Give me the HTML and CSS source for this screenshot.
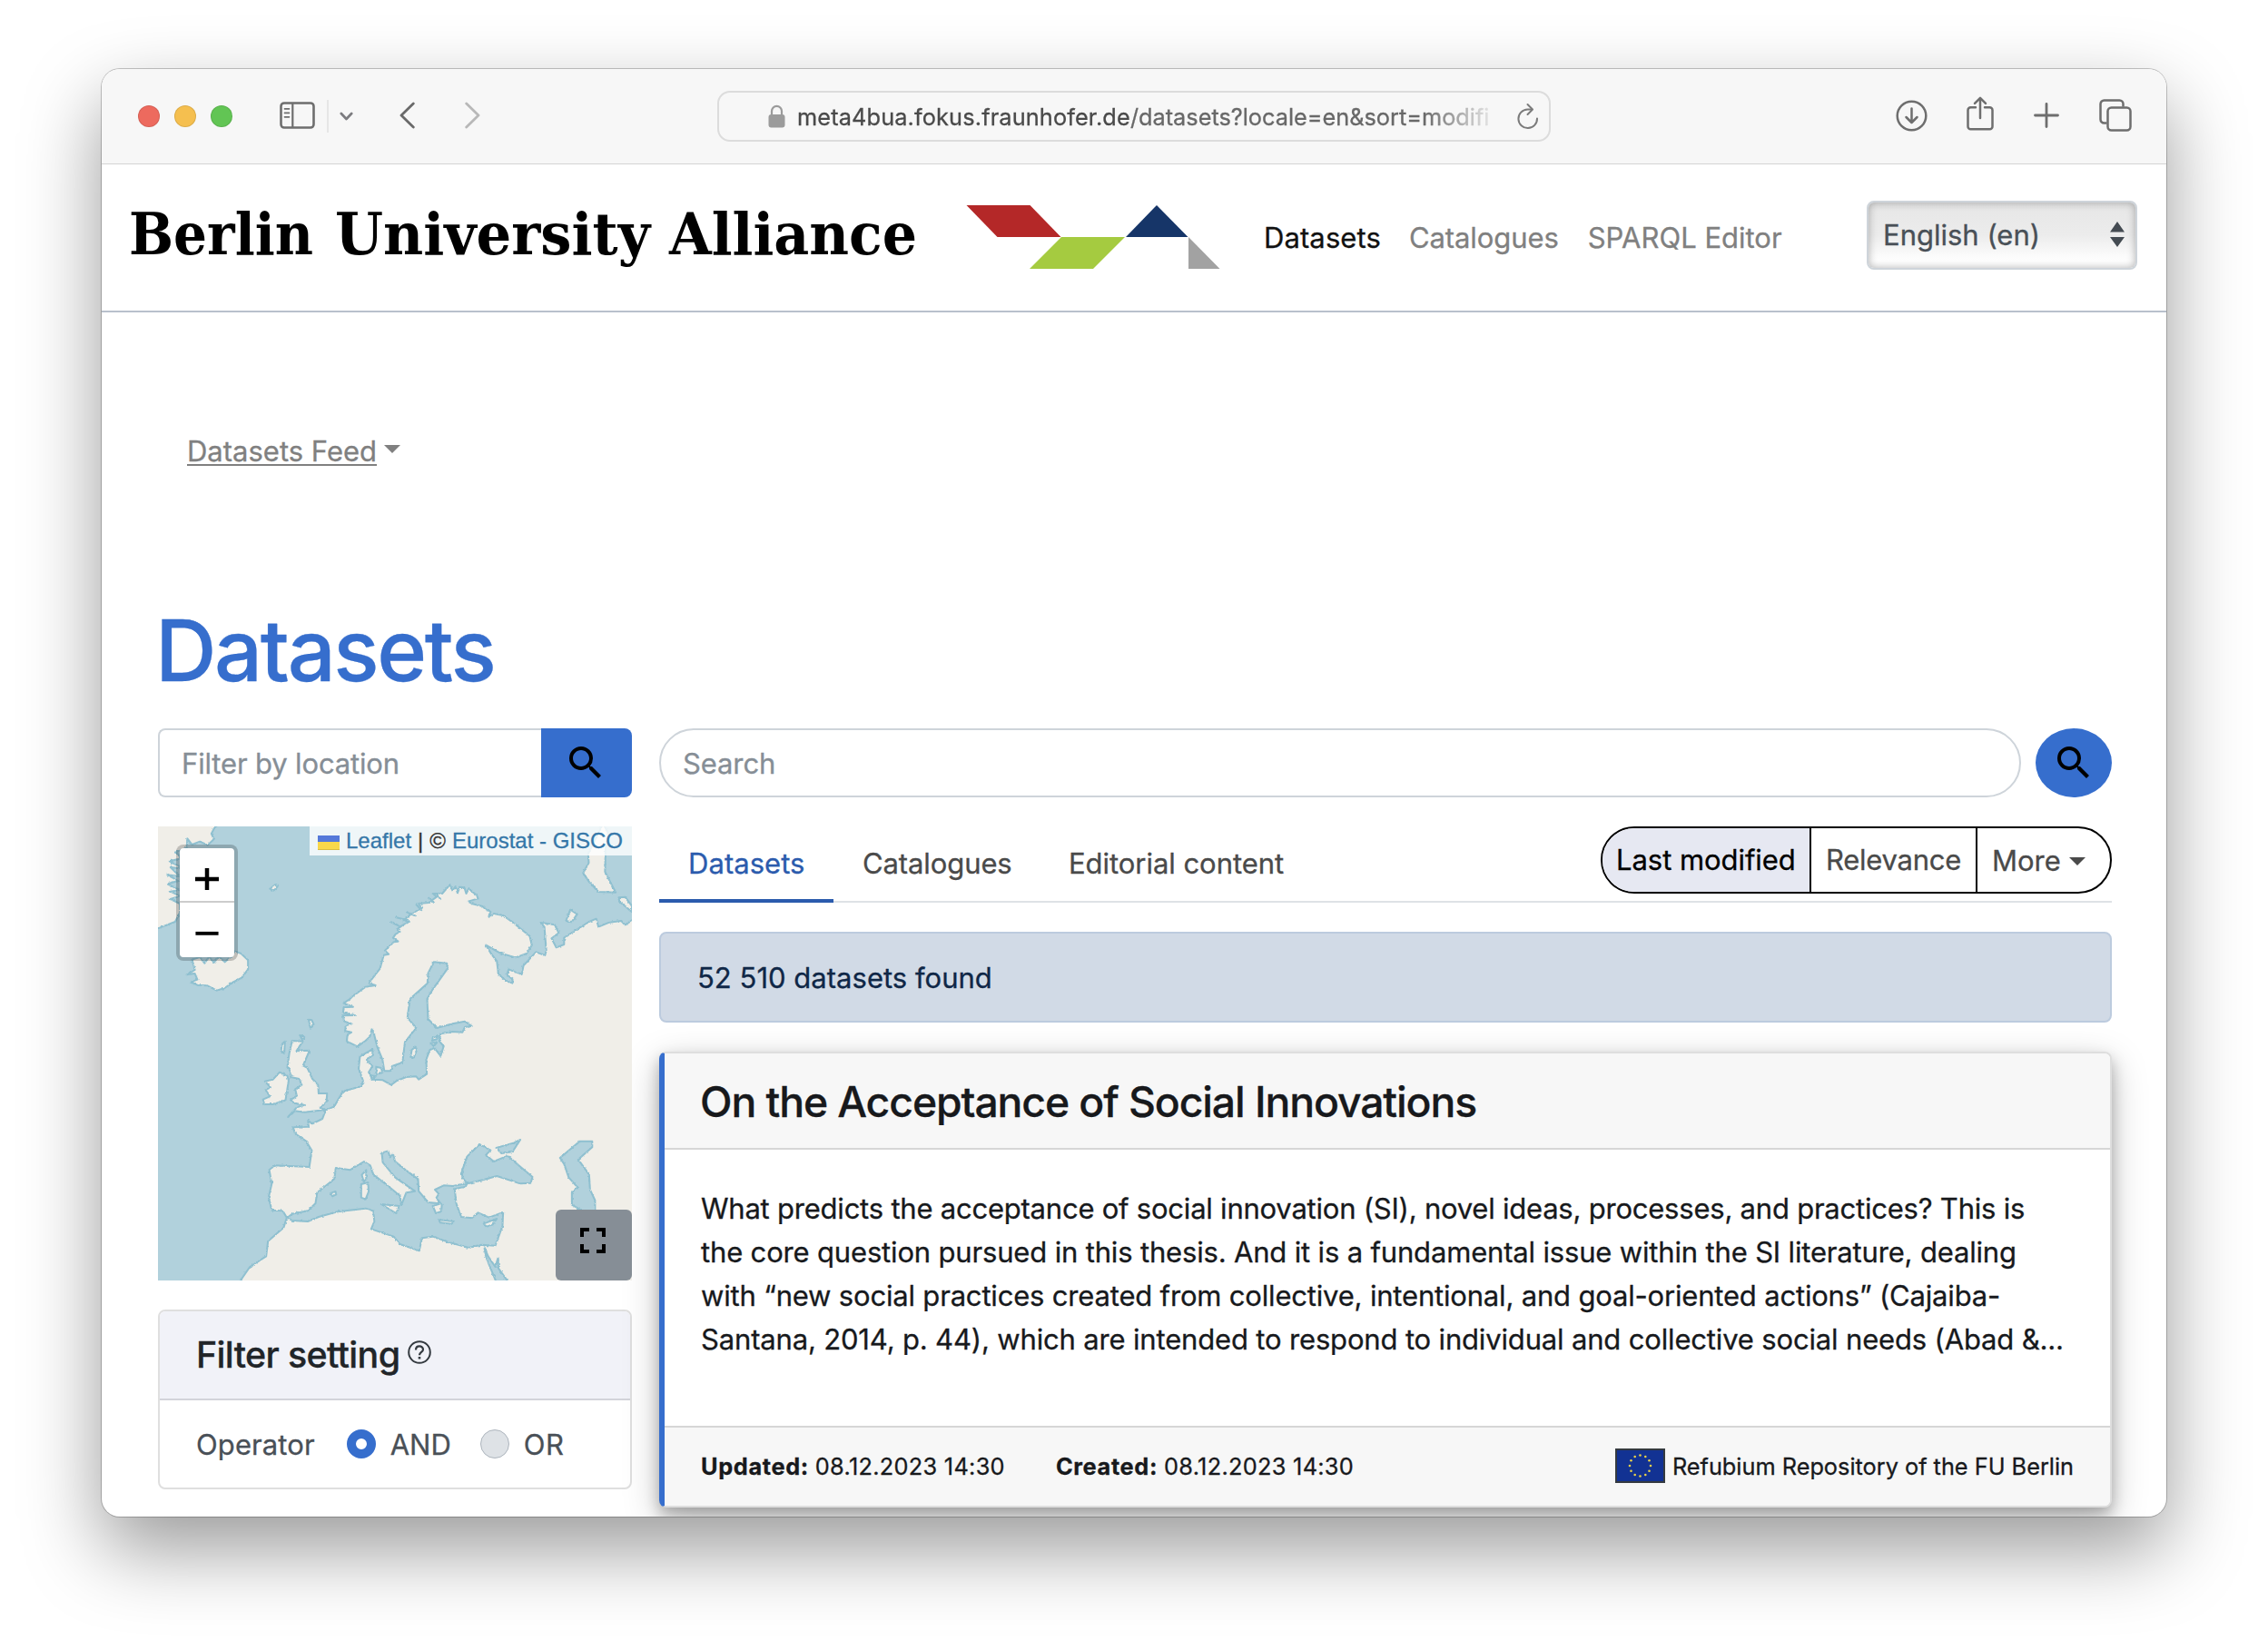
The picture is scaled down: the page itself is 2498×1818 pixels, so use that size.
FILE: index.html
```html
<!DOCTYPE html>
<html lang="en">
<head>
<meta charset="utf-8">
<title>Datasets - Berlin University Alliance</title>
<link rel="stylesheet" href="styles.css">
</head>
<body>
<div class="window">
  <div class="toolbar">
    <div class="toolbar-left">
      <span class="light red"></span><span class="light yellow"></span><span class="light green"></span>
      <svg class="ic-sidebar" width="39" height="30" viewBox="0 0 39 30" fill="none" stroke="#6e6e6e"><rect x="1.500" y="1.500" width="36" height="27" rx="3.500" stroke-width="2.600"/><path d="M14.300 1.500v27" stroke-width="2.200"/><path d="M5.500 7.800h5M5.500 12.300h5M5.500 16.800h5" stroke-width="1.700" stroke-linecap="round"/></svg>
      <span class="tool-sep"></span>
      <svg class="ic-chev" width="15" height="10" viewBox="0 0 15 10" fill="none" stroke="#7c7c80" stroke-width="2.700" stroke-linecap="round" stroke-linejoin="round"><path d="M1.800 2l5.700 6 5.700-6"/></svg>
      <svg class="ic-back" width="17" height="30" viewBox="0 0 17 30" fill="none" stroke="#6a6a6a" stroke-width="2.800" stroke-linecap="round" stroke-linejoin="round"><path d="M15.300 2L2 15l13.300 13"/></svg>
      <svg class="ic-fwd" width="17" height="30" viewBox="0 0 17 30" fill="none" stroke="#b8b8b8" stroke-width="2.800" stroke-linecap="round" stroke-linejoin="round"><path d="M1.700 2L15 15 1.700 28"/></svg>
    </div>
    <div class="address">
      <svg class="ic-lock" width="19" height="26" viewBox="0 0 19 26"><rect x="0.500" y="11" width="18" height="14.500" rx="3" fill="#9b9b9b"/><path d="M4 12V7.500a5.500 5.700 0 0 1 11 0V12" fill="none" stroke="#9b9b9b" stroke-width="2.200"/></svg>
      <div class="url"><span class="url-host">meta4bua.fokus.fraunhofer.de</span><span class="url-path">/datasets?locale=en&amp;sort=modifi</span></div>
      <svg class="ic-reload" width="24" height="30" viewBox="0 0 24 30" fill="none" stroke="#7b7b7b" stroke-width="2" stroke-linecap="round" stroke-linejoin="round"><path d="M16 7.500h-4.500A10.300 10.300 0 1 0 22 17.500"/><path d="M11.500 2l5.500 5.500-5.500 5.500"/></svg>
    </div>
    <div class="toolbar-right">
      <svg class="ic-download" width="35" height="35" viewBox="0 0 35 35" fill="none" stroke="#6e6e6e" stroke-width="2.500" stroke-linecap="round" stroke-linejoin="round"><circle cx="17.500" cy="17.500" r="15.800"/><path d="M17.500 9.500v15M11.500 19l6 6 6-6"/></svg>
      <svg class="ic-share" width="30" height="38" viewBox="0 0 30 38" fill="none" stroke="#6e6e6e" stroke-width="2.500" stroke-linecap="round" stroke-linejoin="round"><path d="M10 12.300H4.500a3 3 0 0 0-3 3v18a3 3 0 0 0 3 3h21a3 3 0 0 0 3-3v-18a3 3 0 0 0-3-3H20"/><path d="M15 24V2M9 7.800L15 1.800l6 6"/></svg>
      <svg width="28" height="28" viewBox="0 0 28 28" stroke="#6e6e6e" stroke-width="2.800" stroke-linecap="round"><path d="M14 1.500v25M1.500 14h25"/></svg>
      <svg width="36" height="36" viewBox="0 0 36 36" fill="none" stroke="#6e6e6e" stroke-width="2.500" stroke-linejoin="round"><rect x="9.500" y="9.500" width="25" height="25" rx="4"/><path d="M8.500 26.500H5.500a4 4 0 0 1-4-4v-17a4 4 0 0 1 4-4h17a4 4 0 0 1 4 4v3"/></svg>
    </div>
  </div>

  <header class="site-header">
    <svg class="brand" width="1200" height="100" viewBox="0 0 1200 100">
      <g class="brand-name">
        <text x="-2" y="68" textLength="203" lengthAdjust="spacingAndGlyphs">Berlin</text>
        <text x="225" y="68" textLength="347" lengthAdjust="spacingAndGlyphs">University</text>
        <text x="593" y="68" textLength="273" lengthAdjust="spacingAndGlyphs">Alliance</text>
      </g>
      <path d="M920.500 14h70l34 35h-70z" fill="#b42828"/>
      <path d="M1025 49h70l-35 35h-70z" fill="#a5cb40"/>
      <path d="M1130 14l34.500 35H1096z" fill="#163568"/>
      <path d="M1165 49l34.500 35H1165z" fill="#a2a2a2"/>
    </svg>
    <nav class="nav"><a class="nav-datasets">Datasets</a><a class="nav-catalogues">Catalogues</a><a>SPARQL Editor</a></nav>
    <div class="lang"><span>English (en)</span><svg width="16" height="28" viewBox="0 0 16 28" fill="#444b52"><path d="M8 0l8 11.500H0zM8 28L0 17h16z"/></svg></div>
  </header>

  <main class="content">
    <div class="feed"><span>Datasets Feed</span><i class="caret"></i></div>
    <h1 class="title">Datasets</h1>
    <div class="columns">
      <aside class="side">
        <div class="loc">
          <div class="loc-input">Filter by location</div>
          <div class="loc-btn"><svg width="48" height="48" viewBox="0 0 24 24"><path d="M15.500 14h-.79l-.28-.27A6.471 6.471 0 0 0 16 9.500 6.500 6.500 0 1 0 9.500 16c1.610 0 3.090-.59 4.230-1.570l.27.28v.79l5 4.990L20.490 19l-4.990-5zm-6 0C7.010 14 5 11.990 5 9.500S7.010 5 9.500 5 14 7.010 14 9.500 11.990 14 9.500 14z"/></svg></div>
        </div>
        <div class="map">
          <svg class="map-art" viewBox="26 30 1516 1500" preserveAspectRatio="none">
            <defs><filter id="coast" x="0" y="0" width="100%" height="100%"><feTurbulence type="fractalNoise" baseFrequency="0.12" numOctaves="2" seed="4"/><feDisplacementMap in="SourceGraphic" scale="8" xChannelSelector="R" yChannelSelector="G"/></filter></defs>
            <g filter="url(#coast)" stroke-width="6" stroke-linejoin="round">
              <rect x="0" y="0" width="1600" height="1600" fill="#b1d1dc"/>
              <g fill="#f0eee8" stroke="#8fc0d0">
                <path d="M960 222L968 242 978 228 984 250 992 230 1006 232 1012 252 1020 236 1046 258 1050 268 1018 278 1032 286 1064 294 1072 302 1090 312 1084 328 1100 318 1130 324 1165 350 1215 392 1222 422 1205 450 1170 463 1120 448 1075 422 1090 448 1110 475 1115 518 1142 542 1160 548 1160 535 1142 520 1148 502 1170 512 1190 518 1195 490 1235 445 1264 456 1268 440 1262 362 1250 348 1295 355 1308 382 1285 400 1300 430 1325 420 1325 398 1405 345 1428 335 1435 362 1470 347 1508 342 1520 356 1542 340 1600 340 1600 1600 270 1600 290 1530 320 1485 372 1450 378 1400 428 1355 438 1322 425 1300 390 1298 380 1255 390 1210 382 1165 400 1150 510 1155 518 1100 500 1070 465 1045 458 1024 508 1022 506 1002 520 1012 552 996 562 968 590 955 618 905 678 888 682 870 668 830 672 790 712 766 714 786 694 798 702 812 712 822 700 842 712 866 745 868 772 884 790 870 820 858 852 856 860 866 886 848 884 800 896 768 910 762 930 788 940 756 926 740 930 715 968 708 1000 710 1008 692 1030 690 1008 674 968 682 918 696 890 666 887 600 905 568 952 500 950 482 908 478 890 515 888 548 832 600 824 662 852 696 816 742 808 810 775 822 770 838 750 838 744 800 728 760 716 712 710 700 704 724 690 738 664 757 630 740 632 718 645 710 625 706 626 688 646 682 622 674 618 655 656 654 618 646 620 628 650 626 620 614 640 600 650 590 690 560 722 555 700 548 736 500 748 455 764 452 752 440 780 412 794 410 778 398 786 386 800 378 790 370 810 355 830 345 812 340 838 318 870 300 860 285 892 282 918 262 905 252 935 252z"/>
                <path d="M20 20h205l-18 14-10 20 8 18-20 20-25-12-25 10-15-20-2 30-35 15 20 20-40 10 45 25-42-5 30 30-40-5 35 20-35 10 40 20-30 5 30 15-30 10 30 15v30l-15 30-50 20-40 10z"/>
                <path d="M135 470l25-8 15 20 15-22 15 20 15-20 20 18 20-18 12-18 20 8 22 22v30l-20 28-30 16-25 18-25 8-30-16-32-2-20-10 20-8-8-20-26 4 26-16z"/>
                <path d="M455 738L489 740 469 772 511 770 490 820 504 828 520 864 538 884 540 912 567 912 565 940 545 960 562 966 494 974 464 970 442 990 470 958 496 950 462 944 450 934 470 920 465 898 486 884 478 864 450 858 448 836 440 826 446 780z"/>
                <path d="M432 740l-10 10-2 22 10 8z"/>
                <path d="M415 842L440 854 444 870 434 934 394 948 366 948 362 932 384 922 370 900 386 892 368 872 394 866z"/>
                <path d="M1450 20L1470 60 1458 100 1456 180 1490 248 1435 246 1406 214 1386 184 1404 150 1402 120z"/>
                <path d="M1500 265l20-2 22 30v20l-22-20-18-14z"/><path d="M1345 305l22 15-18 26-18-4z"/><path d="M384 236l18-14 6 8-12 12z"/>
                <path d="M508 668l10 2 6 14-10 14zM480 720l14 6-6 10z"/>
                <path d="M850 758l4 10-10 26-10-4 4-22zM905 728l18-6-4 10-16 6zM898 746l20-2-10 12zM724 824l16 4 4 16-20 4zM708 852l14 4-12 8z"/>
              </g>
              <g fill="#b1d1dc" stroke="#8fc0d0">
                <path d="M440 1322L455 1310 505 1300 530 1275 535 1240 590 1195 595 1158 640 1165 685 1137 705 1150 715 1180 770 1225 800 1250 804 1282 820 1240 848 1235 785 1190 745 1140 742 1108 762 1102 768 1122 778 1112 784 1136 818 1165 858 1195 860 1235 890 1272 930 1276 905 1284 915 1308 932 1302 934 1280 916 1258 924 1244 912 1230 940 1216 970 1218 1016 1208 1010 1220 975 1228 980 1275 996 1320 1030 1324 1050 1306 1085 1322 1130 1305 1128 1350 1105 1415 1060 1412 1020 1422 960 1405 905 1385 870 1390 862 1432 800 1410 780 1385 708 1360 718 1335 715 1300 690 1292 600 1303 540 1320 505 1335 455 1332z"/>
                <path d="M1000 1190L998 1170 1015 1120 1055 1080 1090 1100 1075 1115 1100 1137 1145 1118 1180 1150 1224 1188 1218 1208 1185 1210 1110 1185 1065 1198 1015 1210z"/>
                <path d="M1108 1092l57-17 20-10-25 40-35 5z"/>
                <path d="M1312 1125L1375 1070H1415V1090L1370 1130 1405 1180 1408 1230 1424 1265V1310H1400L1350 1280V1240L1368 1222 1340 1190 1325 1145z"/>
                <path d="M1070 1420L1076 1455 1110 1540H1150L1115 1490 1114 1455 1105 1485 1082 1450z"/>
              </g>
              <path d="M692 1165v30l-8 8-6-22zM676 1212l22-6 2 30-10 26-14-6zM740 1278l58 6-10 24zM925 1330l48 5-8 8-36-4zM1068 1342l42-16-14 20-20 6zM578 1242l16-6 2 10-12 6z" fill="#f0eee8" stroke="#8fc0d0"/>
              <path d="M770 345l30 15M785 330l40 10M820 312l30 14M850 285l20 24M890 265l20 18M915 250l16 22" fill="none" stroke="#8fc0d0"/>
            </g>
          </svg>
          <div class="zoom">
            <svg width="60" height="58" viewBox="0 0 60 58"><path d="M17 34h26M30 22v24" stroke="#000" stroke-width="4.500"/></svg>
            <svg class="zoom-out" width="60" height="60" viewBox="0 0 60 60"><path d="M17 35h26" stroke="#000" stroke-width="4"/></svg>
          </div>
          <div class="attrib"><i class="ua"></i><a>Leaflet</a><span>|</span><span>©</span><a>Eurostat - GISCO</a></div>
          <div class="full"><svg width="48" height="48" viewBox="0 0 24 24"><path d="M7 14H5v5h5v-2H7v-3zm-2-4h2V7h3V5H5v5zm12 7h-3v2h5v-5h-2v3zM14 5v2h3v3h2V5h-5z"/></svg></div>
        </div>
        <section class="filter">
          <div class="filter-head"><span>Filter setting</span><svg width="26" height="26" viewBox="0 0 26 26" fill="none" stroke="#343a40" stroke-width="2"><circle cx="13" cy="13" r="11.800"/><path d="M9 10.600c0-5.600 8-5.300 8-.6 0 3-4 3-4 6.200" stroke-width="2.200"/><path d="M13 18v2.600" stroke-width="2.600"/></svg></div>
          <div class="filter-row"><span class="operator">Operator</span><i class="radio checked"></i><span>AND</span><i class="radio"></i><span class="or">OR</span></div>
        </section>
      </aside>
      <section class="results">
        <div class="search">
          <div class="search-input">Search</div>
          <div class="search-btn"><svg width="48" height="48" viewBox="0 0 24 24"><path d="M15.500 14h-.79l-.28-.27A6.471 6.471 0 0 0 16 9.500 6.500 6.500 0 1 0 9.500 16c1.610 0 3.090-.59 4.230-1.570l.27.28v.79l5 4.990L20.490 19l-4.990-5zm-6 0C7.010 14 5 11.990 5 9.500S7.010 5 9.500 5 14 7.010 14 9.500 11.990 14 9.500 14z"/></svg></div>
        </div>
        <div class="tabs">
          <a class="tab tab-on">Datasets</a><a class="tab tab-catalogues">Catalogues</a><a class="tab tab-editorial">Editorial content</a>
          <div class="sort"><span class="sort-modified">Last modified</span><span class="sort-relevance">Relevance</span><span class="sort-more"><span>More</span><i class="caret dark"></i></span></div>
        </div>
        <div class="found">52 510 datasets found</div>
        <article class="card">
          <h2 class="card-head">On the Acceptance of Social Innovations</h2>
          <div class="card-body">
            <div class="line-1">What predicts the acceptance of social innovation (SI), novel ideas, processes, and practices? This is</div>
            <div class="line-2">the core question pursued in this thesis. And it is a fundamental issue within the SI literature, dealing</div>
            <div class="line-3">with “new social practices created from collective, intentional, and goal-oriented actions” (Cajaiba-</div>
            <div class="line-4">Santana, 2014, p. 44), which are intended to respond to individual and collective social needs (Abad &amp;...</div>
          </div>
          <div class="card-foot">
            <b>Updated:</b><span class="date updated">08.12.2023 14:30</span><b>Created:</b><span class="date">08.12.2023 14:30</span>
            <span class="src"><svg width="55" height="38" viewBox="0 0 55 38"><rect x="1" y="1" width="53" height="36" fill="#123293" stroke="#343a40" stroke-width="2"/><g fill="#e8d04a"><circle cx="27.500" cy="7.500" r="1.300"/><circle cx="33.300" cy="9" r="1.300"/><circle cx="37.500" cy="13.200" r="1.300"/><circle cx="39" cy="19" r="1.300"/><circle cx="37.500" cy="24.800" r="1.300"/><circle cx="33.300" cy="29" r="1.300"/><circle cx="27.500" cy="30.500" r="1.300"/><circle cx="21.700" cy="29" r="1.300"/><circle cx="17.500" cy="24.800" r="1.300"/><circle cx="16" cy="19" r="1.300"/><circle cx="17.500" cy="13.200" r="1.300"/><circle cx="21.700" cy="9" r="1.300"/></g></svg><span class="src-name">Refubium Repository of the FU Berlin</span></span>
          </div>
        </article>
      </section>
    </div>
  </main>
</div>
</body>
</html>
```
FILE: styles.css
```css
* { box-sizing: border-box; }
body { margin: 0; padding: 76px 112px 0; height: 1818px; overflow: hidden; background: #fff; font-family: Inter, "Liberation Sans", sans-serif; font-size: 31px; color: #17191c; -webkit-text-stroke: 0.3px; }
svg { display: block; flex: none; }
i { display: block; flex: none; }
.window { width: 2274px; height: 1594px; border-radius: 20px; overflow: hidden; background: #fff; box-shadow: 0 0 0 1px rgba(0,0,0,.22), 0 36px 86px rgba(0,0,0,.4); }

.toolbar { height: 105px; display: flex; align-items: center; background: #f7f7f7; border-bottom: 1px solid #d4d4d4; }
.toolbar-left { width: 678px; padding-left: 40px; display: flex; align-items: center; }
.light { width: 24px; height: 24px; border-radius: 50%; margin-right: 16px; border: 1px solid rgba(0,0,0,.1); }
.red { background: #ed6a5e; }
.yellow { background: #f5bf4f; }
.green { background: #62c554; }
.ic-sidebar { margin: 0 0 2px 36px; }
.tool-sep { width: 2px; height: 36px; margin-left: 13px; background: #e6e6e6; }
.ic-chev { margin-left: 12px; }
.ic-back { margin: 0 0 3px 51px; }
.ic-fwd { margin: 0 0 3px 55px; }
.address { width: 918px; height: 56px; padding-left: 54px; display: flex; align-items: center; border: 2px solid #dcdcdc; border-radius: 14px; }
.url { width: 782px; margin-left: 13px; padding-top: 1px; white-space: nowrap; font-size: 25.3px; color: #4a4a4a; -webkit-mask-image: linear-gradient(90deg, #000 690px, transparent 775px); mask-image: linear-gradient(90deg, #000 690px, transparent 775px); }
.url-host { letter-spacing: .138px; }
.url-path { color: #686868; }
.ic-reload { margin-left: 11px; }
.toolbar-right { flex: 1; padding: 0 38px 2px 0; display: flex; align-items: center; justify-content: flex-end; gap: 44px; }
.ic-download { margin-right: -1px; }
.ic-share { margin-bottom: 4px; }

.site-header { height: 163px; padding-left: 32px; display: flex; align-items: center; border-bottom: 2px solid #b8c0cc; }
.brand { overflow: visible; }
.brand-name { font-family: "DejaVu Serif Condensed", "DejaVu Serif", serif; font-weight: 700; font-size: 64px; fill: #000; -webkit-text-stroke: 0; }
.nav { display: flex; margin-left: 48px; color: #808080; }
.nav-datasets { margin-right: 31px; letter-spacing: .1px; color: #111; }
.nav-catalogues { margin-right: 32px; letter-spacing: -.085px; }
.lang { width: 298px; height: 76px; margin: 0 32px 5px auto; padding: 0 12px 2px 16px; display: flex; align-items: center; justify-content: space-between; color: #495057; border: 2px solid #ced4da; border-radius: 8px; background: linear-gradient(#e6e6e6, #ececec 50%, #fff 90%); box-shadow: inset 0 0 10px rgba(0,0,0,.3); }

.content { padding: 129px 60px 0 62px; }
.feed { display: flex; align-items: flex-start; gap: 8px; margin-left: 32px; line-height: 48px; color: #808080; text-decoration: underline; text-decoration-thickness: 2px; text-underline-offset: 3px; }
.caret { width: 0; height: 0; margin-top: 17px; border: 9px solid transparent; border-top-color: #808080; border-bottom: 0; }
.title { margin: 139px 0 30px -3px; font-size: 93.5px; font-weight: 500; line-height: 112px; letter-spacing: -2.4px; color: #366ecd; }
.columns { display: grid; grid-template-columns: 522px 1600px; gap: 30px; }
.side, .results { display: flex; flex-direction: column; gap: 32px; }

.loc { display: flex; height: 76px; }
.loc-input { flex: 1; padding-left: 24px; line-height: 73px; letter-spacing: -.15px; color: #868e96; border: 2px solid #ced4da; border-right: 0; border-radius: 8px 0 0 8px; }
.loc-btn { width: 100px; padding: 14px 0 0 25px; background: #366ecd; border-radius: 0 8px 8px 0; }
.map { position: relative; height: 500px; }
.map-art { width: 522px; height: 500px; }
.zoom { position: absolute; left: 20px; top: 20px; width: 68px; height: 128px; background: #fff; background-clip: padding-box; border: 4px solid rgba(0,0,0,.2); border-radius: 8px; }
.zoom-out { border-top: 2px solid #ccc; }
.attrib { position: absolute; right: 0; top: 0; width: 355px; height: 32px; padding-left: 9px; display: flex; align-items: center; gap: 7px; background: rgba(255,255,255,.8); font: 24px/32px "Liberation Sans", sans-serif; color: #333; white-space: nowrap; }
.attrib a { color: #3577a8; }
.ua { width: 24px; height: 16px; background: linear-gradient(#5579d9 50%, #f9d84a 50%); border-bottom: 1px solid #d9bc40; margin-top: 4px; }
.full { position: absolute; right: 0; bottom: 0; width: 84px; height: 78px; padding: 10px 0 0 17px; background: #868e96; border-radius: 6px; }

.filter { height: 198px; border: 2px solid #dfdfdf; border-radius: 8px; overflow: hidden; }
.filter-head { height: 98px; padding-left: 40px; display: flex; align-items: center; background: #f1f2f8; border-bottom: 2px solid #d3d4da; font-size: 39.4px; font-weight: 500; letter-spacing: -.66px; color: #212529; }
.filter-head svg { margin: 0 0 6px 9px; }
.filter-row { height: 96px; padding-left: 40px; display: flex; align-items: center; color: #495057; }
.operator { letter-spacing: .1px; }
.or { letter-spacing: .5px; }
.radio { width: 32px; height: 32px; border-radius: 50%; background: #dee2e6; border: 1px solid #adb5bd; margin: 0 16px 0 32px; }
.radio.checked { background: #fff; border: 10px solid #366ecd; margin-left: 35px; }

.search { display: flex; height: 76px; gap: 16px; }
.search-input { width: 1500px; padding-left: 24px; line-height: 73px; letter-spacing: -.1px; color: #868e96; border: 2px solid #ced4da; border-radius: 38px; }
.search-btn { width: 84px; padding: 14px 0 0 18px; background: #366ecd; border-radius: 50%; }
.tabs { height: 84px; display: flex; align-items: flex-start; line-height: 82px; color: #4a4a4a; box-shadow: inset 0 -2px #dee2e6; }
.tab { height: 84px; padding-left: 32px; }
.tab-on { width: 192px; letter-spacing: .05px; color: #2b5bad; border-bottom: 4px solid #2b5bad; }
.tab-catalogues { width: 227px; letter-spacing: -.1px; }
.tab-editorial { letter-spacing: -.043px; }
.sort { width: 563px; height: 74px; margin-left: auto; display: flex; line-height: 70px; border: 2px solid #000; border-radius: 37px; overflow: hidden; }
.sort-modified { width: 230px; padding-left: 15px; letter-spacing: -.05px; background: #e6e8f2; color: #000; border-right: 2px solid #000; }
.sort-relevance { width: 183px; padding-left: 16px; letter-spacing: -.25px; border-right: 2px solid #000; }
.sort-more { flex: 1; padding: 1px 0 0 16px; display: flex; gap: 9px; }
.caret.dark { margin-top: 31px; border-top-color: #4a4a4a; }
.found { height: 100px; padding-left: 40px; line-height: 98px; letter-spacing: .02px; background: #d1dae6; border: 2px solid #bccbde; border-radius: 8px; color: #0f2747; }
.card { height: 502px; border: 2px solid #dedede; border-left: 6px solid #366ecd; border-radius: 8px; background: #fff; box-shadow: 0 8px 16px rgba(0,0,0,.25), 0 12px 40px rgba(0,0,0,.22); }
.card-head { height: 106px; margin: 0; padding: 1px 0 0 39px; line-height: 104px; font-size: 46.3px; font-weight: 500; letter-spacing: -1.09px; background: #f7f7f7; border-bottom: 2px solid #d6d6d6; border-radius: 0 6px 0 0; }
.card-body { height: 304px; padding: 41px 0 0 40px; line-height: 48px; white-space: nowrap; }
.line-1 { letter-spacing: -.221px; }
.line-2 { letter-spacing: -.167px; }
.line-3 { letter-spacing: -.182px; }
.line-4 { letter-spacing: -.162px; }
.card-foot { height: 88px; padding: 0 40px 2px; display: flex; align-items: center; font-size: 25.3px; background: #f7f7f7; border-top: 2px solid #d6d6d6; border-radius: 0 0 6px 0; }
.card-foot b { margin-right: 7px; letter-spacing: .66px; }
.date { letter-spacing: .3px; }
.updated { margin-right: 56px; }
.src { margin-left: auto; display: flex; align-items: center; gap: 8px; }
```
